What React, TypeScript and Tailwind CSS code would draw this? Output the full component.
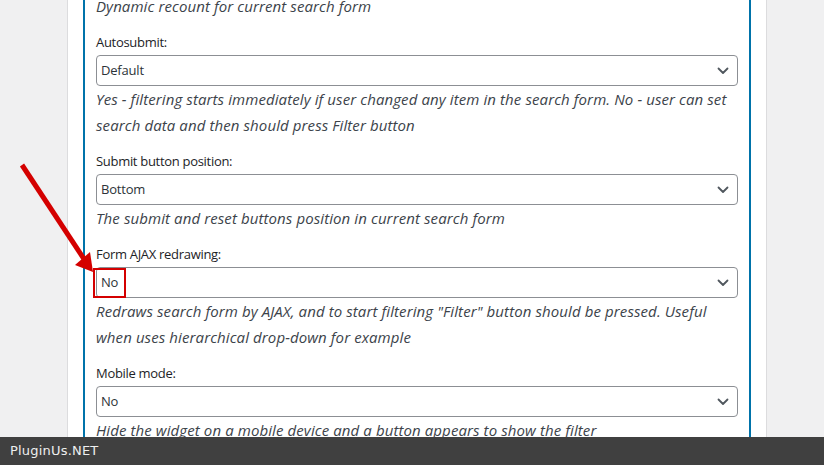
import React from 'react';

type Field = {
  label: string;
  value: string;
  desc: string;
};

const fields: Field[] = [
  {
    label: 'Autosubmit:',
    value: 'Default',
    desc: 'Yes - filtering starts immediately if user changed any item in the search form. No - user can set search data and then should press Filter button',
  },
  {
    label: 'Submit button position:',
    value: 'Bottom',
    desc: 'The submit and reset buttons position in current search form',
  },
  {
    label: 'Form AJAX redrawing:',
    value: 'No',
    desc: 'Redraws search form by AJAX, and to start filtering "Filter" button should be pressed. Useful when uses hierarchical drop-down for example',
  },
  {
    label: 'Mobile mode:',
    value: 'No',
    desc: 'Hide the widget on a mobile device and a button appears to show the filter',
  },
];

function Chevron() {
  return (
    <svg width="12" height="8" viewBox="0 0 12 8" className="shrink-0">
      <path d="M1.5 1.5 L6 6 L10.5 1.5" fill="none" stroke="#50575e" strokeWidth="1.8" strokeLinecap="round" strokeLinejoin="round" />
    </svg>
  );
}

function FakeSelect({ value }: { value: string }) {
  return (
    <div className="h-[31px] border border-[#8c8f94] rounded-[4px] flex items-center justify-between pl-[4px] pr-[8px] text-[13px] tracking-[-0.2px] text-[#2c3338] bg-white">
      <span>{value}</span>
      <Chevron />
    </div>
  );
}

function Desc({ children }: { children: React.ReactNode }) {
  return <p className="italic text-[15px] tracking-[0.1px] leading-[26px] text-[#3c434a]">{children}</p>;
}

export default function App() {
  return (
    <div
      className="relative w-[824px] h-[465px] overflow-hidden bg-[#f0f0f1]"
      style={{ fontFamily: '"Open Sans", "Noto Sans", sans-serif' }}
    >
      <div className="ml-[67px] w-[700px] h-full bg-white border-x border-[#dcdcde] px-[15px]">
        <div className="h-full border-x-2 border-[#0073aa] px-[11px]">
          <div className="-mt-[7px]">
            <Desc>Dynamic recount for current search form</Desc>
            {fields.map((f) => (
              <div key={f.label} className="mt-[13px]">
                <div className="text-[13px] tracking-[-0.3px] leading-[20px] text-[#1d2327] mb-[3px]">{f.label}</div>
                <FakeSelect value={f.value} />
                <Desc>{f.desc}</Desc>
              </div>
            ))}
          </div>
        </div>
      </div>

      {/* annotation: red box + arrow */}
      <div className="absolute left-[93px] top-[268px] w-[33px] h-[30px] border-2 border-[#d40000]" />
      <svg className="absolute left-0 top-0 pointer-events-none" width="824" height="465">
        <line x1="22" y1="165" x2="84" y2="259" stroke="#d40000" strokeWidth="5" />
        <polygon points="93,272 75,265 90,252" fill="#d40000" />
      </svg>

      <div
        className="absolute left-0 bottom-0 w-full h-[28px] bg-[#404040] flex items-center pl-[10px] text-[13px] tracking-[0.2px] text-[#eeeeee]"
        style={{ fontFamily: '"DejaVu Sans", sans-serif' }}
      >
        PluginUs.NET
      </div>
    </div>
  );
}
